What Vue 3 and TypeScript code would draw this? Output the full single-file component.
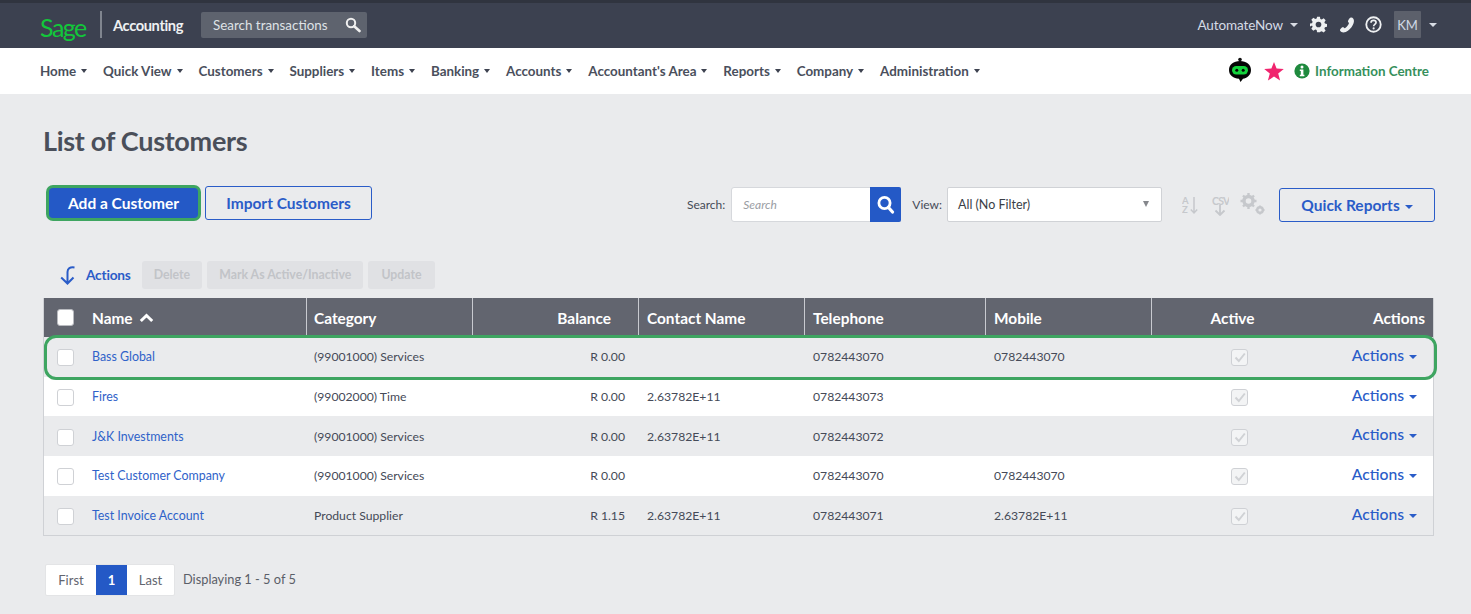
<script setup lang="ts">
interface Customer { name: string; category: string; balance: string; contact: string; telephone: string; mobile: string }
const menu: string[] = ['Home', 'Quick View', 'Customers', 'Suppliers', 'Items', 'Banking', 'Accounts', "Accountant's Area", 'Reports', 'Company', 'Administration']
const customers: Customer[] = [
  { name: 'Bass Global', category: '(99001000) Services', balance: 'R 0.00', contact: '', telephone: '0782443070', mobile: '0782443070' },
  { name: 'Fires', category: '(99002000) Time', balance: 'R 0.00', contact: '2.63782E+11', telephone: '0782443073', mobile: '' },
  { name: 'J&K Investments', category: '(99001000) Services', balance: 'R 0.00', contact: '2.63782E+11', telephone: '0782443072', mobile: '' },
  { name: 'Test Customer Company', category: '(99001000) Services', balance: 'R 0.00', contact: '', telephone: '0782443070', mobile: '0782443070' },
  { name: 'Test Invoice Account', category: 'Product Supplier', balance: 'R 1.15', contact: '2.63782E+11', telephone: '0782443071', mobile: '2.63782E+11' }
]
</script>

<template>
  <div class="page">
    <header class="topbar">
      <div class="brand">
        <span class="sage">Sage</span>
        <span class="brand-rule"></span>
        <span class="product">Accounting</span>
      </div>
      <div class="global-search">
        <span>Search transactions</span>
        <svg width="16" height="16" viewBox="0 0 16 16"><circle cx="6" cy="6" r="4.2" fill="none" stroke="#f0f0f0" stroke-width="2"/><path d="M9.2 9.2 14.5 14" stroke="#f0f0f0" stroke-width="2.6" stroke-linecap="round"/></svg>
      </div>
      <div class="top-right">
        <span class="company">AutomateNow</span><i class="caret light"></i>
        <svg class="ticon gear" width="17" height="17" viewBox="0 0 24 24"><path fill="#eef0f2" d="M10 1h4l.6 3.2 2 .8L19.300 3.200l2.800 2.800-1.800 2.700.8 2 3 .6v4l-3 .6-.8 2 1.800 2.700-2.800 2.800-2.700-1.800-2 .8L14 23h-4l-.6-3.200-2-.8-2.700 1.800-2.800-2.800 1.800-2.700-.8-2L0 14.700v-4l2.900-.6.800-2L1.900 5.400l2.800-2.800L7.400 4.400l2-.8z"/><circle cx="12" cy="12" r="4" fill="#3c4150"/></svg>
        <svg class="ticon phone" width="16" height="16" viewBox="0 0 24 24"><path fill="#eef0f2" d="M17 1c2-.6 3.500.2 4.500 1.500 1.500 2 1.200 5.500-.8 9.500-2.200 4.500-6 8.500-10.500 10.500-2.500 1-5 1-6.500 0C2.500 21.500 1 20 1.500 19c.8-1.300 2.500-3.500 4-3.800 1.300-.2 2 1.500 3.200 1.700 1.800-.5 5.500-5.300 6.200-7.200.3-1.200-1.700-2-1.500-3.300.2-1.600 2.300-4.700 3.600-5.400z"/></svg>
        <svg class="ticon help" width="17" height="17" viewBox="0 0 24 24"><circle cx="12" cy="12" r="10.200" fill="none" stroke="#eef0f2" stroke-width="2.600"/><path d="M8.500 9.500c0-2 1.600-3.200 3.600-3.200 2 0 3.500 1.200 3.500 3 0 2.600-3.400 2.600-3.400 5" fill="none" stroke="#eef0f2" stroke-width="2.400"/><circle cx="12.200" cy="17.500" r="1.500" fill="#eef0f2"/></svg>
        <span class="avatar">KM</span><i class="caret light wide"></i>
      </div>
    </header>

    <nav class="menubar">
      <ul class="menu">
        <li v-for="item in menu" :key="item">{{ item }}<i class="caret dark"></i></li>
      </ul>
      <div class="menu-right">
        <svg class="bot" width="24" height="26" viewBox="0 0 24 26"><circle cx="12" cy="2.500" r="1.800" fill="#111"/><path fill="#050505" d="M12 4c6.500 0 11 3.500 11 9s-4.500 8.500-8 8.700L12.500 25l-1.500-3.300C5.500 21.500 1 18.500 1 13s4.500-9 11-9z"/><rect x="4" y="9" width="16" height="8.500" rx="4.200" fill="#14d23c"/><circle cx="8.800" cy="13.200" r="1.500" fill="#050505"/><circle cx="15.200" cy="13.200" r="1.500" fill="#050505"/></svg>
        <svg class="star" width="20" height="19" viewBox="0 0 20 19"><path fill="#f0246e" d="M10 0l2.600 6.600 7.200.4-5.600 4.500 1.900 7L10 14.600 3.900 18.500l1.900-7L.2 7l7.200-.4z"/></svg>
        <svg class="info" width="16" height="16" viewBox="0 0 16 16"><circle cx="8" cy="8" r="7.600" fill="#1f8a3e"/><circle cx="8" cy="3.900" r="1.500" fill="#fff"/><path fill="#fff" d="M5.800 6.400h3.600v5.300h1v1.500H5.800v-1.500h1V7.900h-1z"/></svg>
        <span class="info-text">Information Centre</span>
      </div>
    </nav>

    <main class="content">
      <h1>List of Customers</h1>

      <section class="toolbar">
        <div class="primary-actions">
          <button class="btn solid">Add a Customer</button>
          <button class="btn outline import">Import Customers</button>
        </div>
        <div class="filters">
          <label class="lbl">Search:</label>
          <div class="searchbox">
            <span class="placeholder">Search</span>
            <span class="search-btn">
              <svg width="19" height="19" viewBox="0 0 19 19"><circle cx="8.500" cy="8" r="5.600" fill="none" stroke="#fff" stroke-width="2.800"/><path d="M12.500 12.500 16.500 17" stroke="#fff" stroke-width="3.200" stroke-linecap="round"/></svg>
            </span>
          </div>
          <label class="lbl view">View:</label>
          <div class="select"><span>All (No Filter)</span><i class="caret grey"></i></div>
          <div class="tool-icons">
            <svg width="18" height="22" viewBox="0 0 18 22"><text x="0" y="11" class="az">A</text><text x="0" y="20" class="az">Z</text><path d="M12 4v16M8.800 16.500 12 20l3.200-3.500" fill="none" stroke="#c6c8cc" stroke-width="1.500"/></svg>
            <svg width="18" height="24" viewBox="0 0 18 24"><text x="1" y="13" class="csv">CSV</text><path d="M9 13v10M4.500 18.500 9 23l4.500-4.500" fill="none" stroke="#c6c8cc" stroke-width="1.800"/></svg>
            <svg width="26" height="22" viewBox="0 0 26 22"><circle cx="8.500" cy="8" r="4.500" fill="none" stroke="#c6c8cc" stroke-width="3.400"/><path d="M8.500 0v3M8.500 13v3M.5 8h3M13.500 8h3M3 2.500l2 2M12 11.500l2 2M14 2.500l-2 2M5 11.500l-2 2" stroke="#c6c8cc" stroke-width="2.400"/><circle cx="20" cy="17" r="2.800" fill="none" stroke="#c6c8cc" stroke-width="2.400"/><path d="M20 12.500V14M20 20v1.500M15.500 17H17M23 17h1.500" stroke="#c6c8cc" stroke-width="1.800"/></svg>
          </div>
          <button class="btn outline reports">Quick Reports<i class="caret blue"></i></button>
        </div>
      </section>

      <section class="bulk">
        <svg width="18" height="20" viewBox="0 0 18 20"><path d="M16.500 2.500C12 1.800 9.500 3.500 9.500 7v11M3.200 12.500 9.500 18.500l6-6" fill="none" stroke="#2a5cc8" stroke-width="2"/></svg>
        <span class="bulk-label">Actions</span>
        <span class="chip">Delete</span>
        <span class="chip">Mark As Active/Inactive</span>
        <span class="chip">Update</span>
      </section>

      <section class="table">
        <div class="row head">
          <div class="cell name-cell"><span class="check head-check"></span><span>Name</span>
            <svg class="sort" width="15" height="10" viewBox="0 0 15 10"><path d="M1.800 8 7.500 2.500 13.200 8" fill="none" stroke="#fff" stroke-width="3"/></svg>
          </div>
          <div class="cell">Category</div>
          <div class="cell right">Balance</div>
          <div class="cell">Contact Name</div>
          <div class="cell">Telephone</div>
          <div class="cell">Mobile</div>
          <div class="cell center">Active</div>
          <div class="cell right last">Actions</div>
        </div>
        <div v-for="c in customers" :key="c.name" class="row body">
          <div class="cell name-cell"><span class="check"></span><a>{{ c.name }}</a></div>
          <div class="cell">{{ c.category }}</div>
          <div class="cell right bal">{{ c.balance }}</div>
          <div class="cell">{{ c.contact }}</div>
          <div class="cell">{{ c.telephone }}</div>
          <div class="cell">{{ c.mobile }}</div>
          <div class="cell center">
            <span class="check ticked">
              <svg width="12" height="11" viewBox="0 0 12 11"><path d="M1.500 5.500 4.800 9 10.800 1.500" fill="none" stroke="#d0d2d5" stroke-width="2"/></svg>
            </span>
          </div>
          <div class="cell right row-actions">Actions<i class="caret blue"></i></div>
        </div>
        <div class="highlight"></div>
      </section>

      <footer class="pager">
        <div class="pages">
          <span class="pg">First</span><span class="pg current">1</span><span class="pg">Last</span>
        </div>
        <span class="count">Displaying 1 - 5 of 5</span>
      </footer>
    </main>
  </div>
</template>

<style>
html, body { margin: 0; background: #eaebed; }
</style>

<style scoped>
.page { width: 1471px; height: 614px; overflow: hidden; background: #eaebed; font-family: Lato, "Open Sans", sans-serif; color: #4c505a; }

.topbar { border-top: 3px solid #30343f; background: #3c4150; display: flex; align-items: center; padding: 0 34px 2px 40px; height: 43px; color: #dfe3ea; }
.brand { display: flex; align-items: center; width: 161px; }
.sage { color: #12c73a; font-size: 25px; width: 60px; font-family: Lato, sans-serif; font-weight: 400; letter-spacing: -1.500px; position: relative; top: 2px; }
.brand-rule { width: 2px; height: 27px; background: #80858f; margin-right: 11px; }
.product { color: #eef0f2; font-size: 14.700px; font-weight: 700; letter-spacing: -.4px; }
.global-search { width: 148px; height: 26px; background: #5e636e; border-radius: 2px; display: flex; align-items: center; justify-content: space-between; padding: 0 6px 0 12px; font-size: 13.400px; color: #dfe2e6; }
.top-right { margin-left: auto; display: flex; align-items: center; font-size: 13.500px; color: #d5dbe6; }
.company { letter-spacing: -.1px; }
.ticon { display: block; }
.gear { margin-left: 12px; }
.phone { margin-left: 12px; }
.help { margin-left: 10px; }
.avatar { margin-left: 12px; width: 27px; height: 27px; background: #5c606b; display: flex; align-items: center; justify-content: center; font-size: 13px; color: #cfd8e6; border-radius: 1px; }

.caret { display: inline-block; width: 0; height: 0; border-left: 3.500px solid transparent; border-right: 3.500px solid transparent; border-top: 4px solid #333; }
.caret.light { border-left-width: 4px; border-right-width: 4px; border-top-color: #d8dce4; margin-left: 7px; }
.caret.light.wide { border-left-width: 4.500px; border-right-width: 4.500px; border-top-width: 4.500px; margin-left: 8px; }
.caret.dark { border-top-color: #3d4250; margin-left: 5px; position: relative; top: -3px; }
.caret.grey { border-top-color: #85878c; border-top-width: 6px; }
.caret.blue { border-left-width: 4px; border-right-width: 4px; border-top-width: 4px; border-top-color: #2a5cc8; margin-left: 5px; position: relative; top: 2px; }

.menubar { height: 46px; background: #fff; display: flex; align-items: center; padding: 0 42px 0 40px; }
.menu { list-style: none; margin: 0; padding: 0; display: flex; gap: 15.900px; font-size: 13.400px; font-weight: 700; color: #4a4f5c; }
.menu li { white-space: nowrap; }
.menu-right { margin-left: auto; display: flex; align-items: center; }
.bot { position: relative; top: -1px; }
.star { margin-left: 12px; }
.info { margin-left: 10px; }
.info-text { margin-left: 5px; font-size: 13.400px; font-weight: 700; color: #36905c; }

.content { padding: 0 36px 0 43px; }
h1 { margin: 0; padding-top: 29px; font-size: 27px; line-height: 36px; font-weight: 700; color: #4a4f5a; letter-spacing: -.3px; }

.toolbar { margin-top: 25px; display: flex; justify-content: space-between; align-items: center; height: 38px; }
.primary-actions { display: flex; align-items: center; padding-left: 5px; gap: 6px; }
.btn { font-family: inherit; font-size: 15.500px; font-weight: 700; border-radius: 3px; box-sizing: border-box; cursor: pointer; display: inline-flex; align-items: center; justify-content: center; padding: 0; }
.btn.solid { width: 149px; height: 30px; margin: 0 1px; background: #2459c6; color: #fff; border: 0; border-radius: 4px; box-shadow: 0 0 0 3px #3ea561; }
.btn.outline { background: transparent; color: #2a5cc8; border: 1px solid #2a5cc8; }
.import { width: 167px; height: 34px; }
.reports { width: 156px; height: 34px; font-weight: 700; font-size: 15.500px; position: relative; top: 1px; }
.filters { display: flex; align-items: center; position: relative; top: 1px; }
.lbl { font-size: 12px; color: #454a57; }
.searchbox { margin-left: 6px; width: 170px; height: 35px; display: flex; background: #fff; border: 1px solid #d6d8dc; box-sizing: border-box; border-radius: 3px 0 0 3px; }
.placeholder { flex: 1; padding-left: 11px; font-size: 12px; font-style: italic; color: #9a9da3; line-height: 33px; }
.search-btn { width: 31px; height: 35px; margin: -1px; background: #2459c6; display: flex; align-items: center; justify-content: center; border-radius: 0 2px 2px 0; }
.view { margin-left: 11px; }
.select { margin-left: 5px; width: 215px; height: 35px; box-sizing: border-box; background: #fff; border: 1px solid #d0d2d6; border-radius: 2px; display: flex; align-items: center; justify-content: space-between; padding: 0 12px 0 10px; font-size: 12.500px; color: #3a3e47; }
.tool-icons { display: flex; align-items: center; margin-left: 18px; gap: 11px; width: 99px; padding-left: 2px; box-sizing: border-box; }
.tool-icons svg { display: block; flex: none; }
.az { font: 700 9.500px Lato, sans-serif; fill: #c6c8cc; }
.csv { font: 700 10.500px Lato, sans-serif; fill: #c6c8cc; letter-spacing: -.8px; }

.bulk { margin-top: 38px; height: 29px; display: flex; align-items: center; padding-left: 15px; }
.bulk-label { margin-left: 10px; margin-right: 11px; font-size: 13.700px; font-weight: 700; color: #2a5cc8; letter-spacing: -.2px; }
.chip { height: 28px; line-height: 28px; background: #e0e1e4; color: #c2c4c8; font-size: 12.300px; font-weight: 700; border-radius: 3px; padding: 0 12px; margin-right: 5px; }
.chip:last-child { padding: 0 13px; }

.table { margin-top: 9px; position: relative; width: 1391px; box-sizing: border-box; border: 1px solid #cfd1d5; border-top: 0; }
.row { display: grid; grid-template-columns: 262px 166px 166px 166px 181px 166px 162px 120px; }
.head { height: 39px; background: #62656f; color: #fff; font-size: 15.400px; font-weight: 700; }
.head .cell + .cell { border-left: 1px solid #c8cad0; padding-left: 7px; }
.head .cell:nth-child(n+4) { padding-left: 8px; }
.head .cell.right { padding-right: 27px; }
.head .cell.center { padding-right: 0; padding-left: 0; }
.head .cell.last { padding-right: 8px; border-left: 0; }
.body .cell:nth-child(n+4) { padding-left: 9px; }
.cell { display: flex; align-items: center; min-width: 0; box-sizing: border-box; padding-left: 8px; white-space: nowrap; }
.right { justify-content: flex-end; }
.center { justify-content: center; }
.name-cell, .head .name-cell { padding-left: 13px; }
.name-cell .check { margin-right: 18px; }
.sort { margin-left: 6px; }
.body { height: 39.700px; font-size: 12.200px; color: #454a57; }
.body:nth-child(even) { background: #eaebed; }
.body:nth-child(odd) { background: #fff; }
.bal { padding-right: 13px; }
a { color: #2f62c9; font-weight: 400; font-size: 12.400px; }
.check { width: 17px; height: 17px; box-sizing: border-box; background: #fff; border: 1px solid #cfd1d5; border-radius: 3px; display: inline-flex; align-items: center; justify-content: center; flex: none; position: relative; top: 1px; }
.head-check { border-color: #b9bbc0; top: 0; }
.ticked { background: #f3f4f5; }
.body .cell.center { padding-left: 15px; }
.body .cell.row-actions { color: #2a5cc8; font-size: 15.700px; font-weight: 500; padding-right: 16px; padding-left: 0; position: relative; top: -2px; }
.highlight { position: absolute; left: 0; right: -4px; top: 37px; height: 45px; box-sizing: border-box; border: 3px solid #3ea561; border-radius: 12px; pointer-events: none; }

.pager { margin-top: 28px; padding-left: 2px; display: flex; align-items: center; }
.pages { display: flex; height: 32px; background: #fff; border: 1px solid #e3e4e6; border-radius: 2px; box-sizing: border-box; }
.pg { font-size: 13px; color: #62656f; line-height: 30px; width: 50px; text-align: center; }
.pg:last-child { width: 47px; }
.current { width: 31px; background: #2459c6; color: #fff; font-weight: 700; }
.count { margin-left: 8px; font-size: 12.800px; color: #5a5e68; position: relative; top: -1px; }
</style>
